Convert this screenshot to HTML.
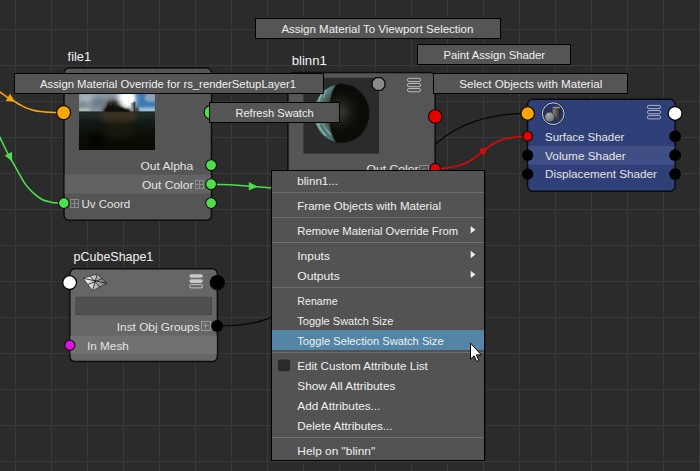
<!DOCTYPE html>
<html>
<head>
<meta charset="utf-8">
<title>Node Editor</title>
<style>
html,body{margin:0;padding:0;background:#2b2b2b;overflow:hidden;}
body{width:700px;height:471px;position:relative;font-family:"Liberation Sans",sans-serif;}
svg{position:absolute;left:0;top:0;display:block;}
text{font-family:"Liberation Sans",sans-serif;}
.ttl{font-size:13.5px;fill:#f2f2f2;}
.lbl{font-size:11.7px;fill:#e4e4e4;}
.mn{font-size:11.5px;fill:#f0f0f0;}
</style>
</head>
<body>
<svg width="700" height="471" viewBox="0 0 700 471">
<defs>
  <pattern id="grid" x="15" y="29" width="36" height="36" patternUnits="userSpaceOnUse">
    <rect x="0" y="0" width="36" height="36" fill="#2b2b2b"/>
    <rect x="0" y="0" width="1" height="36" fill="#393939"/>
    <rect x="0" y="0" width="36" height="1" fill="#393939"/>
  </pattern>
  <linearGradient id="sky" x1="0" y1="0" x2="1" y2="0">
    <stop offset="0" stop-color="#8fa3b3"/>
    <stop offset="0.3" stop-color="#7f8f9a"/>
    <stop offset="0.62" stop-color="#e8eef2"/>
    <stop offset="0.72" stop-color="#ffffff"/>
    <stop offset="0.82" stop-color="#6d9cc6"/>
    <stop offset="1" stop-color="#5a86ad"/>
  </linearGradient>
  <linearGradient id="gnd" x1="0" y1="0" x2="0" y2="1">
    <stop offset="0" stop-color="#223232"/>
    <stop offset="0.25" stop-color="#141c18"/>
    <stop offset="0.6" stop-color="#0c0d06"/>
    <stop offset="1" stop-color="#0a0a03"/>
  </linearGradient>
  <filter id="b0" x="-40%" y="-40%" width="180%" height="180%"><feGaussianBlur stdDeviation="0.6"/></filter>
  <filter id="b1" x="-40%" y="-40%" width="180%" height="180%"><feGaussianBlur stdDeviation="1.2"/></filter>
  <filter id="b2" x="-60%" y="-60%" width="220%" height="220%"><feGaussianBlur stdDeviation="2.5"/></filter>
  <clipPath id="gndclip"><rect x="79" y="112.2" width="76" height="38"/></clipPath>
  <clipPath id="swclip"><rect x="79" y="76" width="76" height="74"/></clipPath>
  <clipPath id="sphclip"><ellipse cx="341.5" cy="113.4" rx="28" ry="29.7"/></clipPath>
  <radialGradient id="sphhl" cx="339" cy="112" r="24" gradientUnits="userSpaceOnUse">
    <stop offset="0" stop-color="#403f38" stop-opacity="1"/>
    <stop offset="0.35" stop-color="#292823" stop-opacity="0.85"/>
    <stop offset="1" stop-color="#0b0b08" stop-opacity="0"/>
  </radialGradient>
  <linearGradient id="teal" x1="0" y1="0" x2="0" y2="1">
    <stop offset="0" stop-color="#527a78"/>
    <stop offset="0.5" stop-color="#78a19d"/>
    <stop offset="1" stop-color="#466c6a"/>
  </linearGradient>
  <linearGradient id="cyl" x1="0" y1="0" x2="1" y2="0">
    <stop offset="0" stop-color="#8a8a8a"/>
    <stop offset="0.45" stop-color="#606060"/>
    <stop offset="1" stop-color="#202020"/>
  </linearGradient>
  <radialGradient id="ball" cx="0.35" cy="0.3" r="0.8">
    <stop offset="0" stop-color="#a8a8a8"/>
    <stop offset="1" stop-color="#6a6a6a"/>
  </radialGradient>
  <linearGradient id="mesh" x1="0" y1="0" x2="1" y2="0">
    <stop offset="0" stop-color="#ffffff"/>
    <stop offset="0.45" stop-color="#c8c8c8"/>
    <stop offset="1" stop-color="#6a6a6a"/>
  </linearGradient>
</defs>

<!-- background grid -->
<rect x="0" y="0" width="700" height="471" fill="url(#grid)"/>

<!-- CONNECTIONS -->
<g fill="none" stroke-width="1.6" stroke-linecap="round">
  <path d="M -8.0,86.0 C -6.7,87.0 -2.2,90.4 0.0,92.0 C 2.2,93.6 3.3,94.5 5.0,95.7 C 6.7,96.9 8.3,98.0 10.0,99.0 C 11.7,100.0 13.3,100.8 15.0,101.8 C 16.7,102.8 18.3,103.9 20.0,104.8 C 21.7,105.7 23.3,106.7 25.0,107.4 C 26.7,108.2 28.3,108.8 30.0,109.3 C 31.7,109.8 33.3,110.2 35.0,110.6 C 36.7,111.0 38.3,111.3 40.0,111.5 C 41.7,111.7 43.3,111.9 45.0,112.0 C 46.7,112.1 48.2,112.2 50.0,112.3 C 51.8,112.4 53.7,112.5 56.0,112.5 C 58.3,112.5 62.7,112.5 64.0,112.5" stroke="#f5a50a"/>
  <path d="M -3.0,131.5 C -2.5,132.5 -1.8,133.8 0.0,137.6 C 1.8,141.3 6.0,150.0 8.0,154.0 C 10.0,158.0 10.7,158.8 12.2,161.4 C 13.7,164.1 14.8,166.1 17.0,169.9 C 19.2,173.7 22.7,180.4 25.5,184.4 C 28.3,188.4 31.2,191.1 34.0,193.7 C 36.8,196.2 39.7,198.3 42.5,199.7 C 45.3,201.1 48.5,201.6 51.0,202.2 C 53.5,202.8 55.6,202.9 57.8,203.0 C 60.0,203.1 63.0,203.0 64.0,203.0" stroke="#4ede4e"/>
  <path d="M 211,184.2 C 235,184.2 250,186.5 272,188" stroke="#4ede4e"/>
  <path d="M 430,149.5 C 455,124 490,113.4 528,113.4" stroke="#060606" stroke-width="1.35"/>
  <path d="M 435,168.6 C 490,168.6 473,136.3 528,136.3" stroke="#e00808"/>
  <path d="M 217,326 C 245,326 262,322 273,316.7" stroke="#060606" stroke-width="1.35"/>
</g>
<!-- arrows -->
<polygon points="10,93.8 15.2,101.7 5.8,100.9" fill="#f5a50a"/>
<polygon points="4.7,155.6 11.9,152 12.3,161.6" fill="#4ede4e"/>
<polygon points="248.8,182 257.6,186.6 248.8,190.4" fill="#4ede4e"/>
<polygon points="478.9,148.8 487.3,148.2 483.7,156" fill="#e00808"/>

<!-- ===== file1 node ===== -->
<text class="ttl" x="67.6" y="60.8" textLength="23.4" lengthAdjust="spacingAndGlyphs">file1</text>
<rect x="64" y="68.1" width="147.5" height="152.2" rx="5" ry="5" fill="#555555" stroke="#0c0c0c" stroke-width="1.5"/>
<rect x="64.7" y="174.6" width="146.1" height="19.1" fill="#636363"/>
<!-- swatch -->
<g clip-path="url(#swclip)">
  <rect x="79" y="76" width="76" height="36.5" fill="#8896a2"/>
  <!-- left clouds -->
  <ellipse cx="87" cy="98" rx="9" ry="4" fill="#a9b6bf" filter="url(#b2)"/>
  <ellipse cx="98" cy="103" rx="7" ry="5" fill="#6d7c89" filter="url(#b2)"/>
  <ellipse cx="82" cy="105" rx="5" ry="3" fill="#7f8e99" filter="url(#b1)"/>
  <rect x="79" y="108.8" width="11" height="2.6" fill="#c6ccba" filter="url(#b1)"/>
  <!-- right blue sky -->
  <rect x="135" y="88" width="24" height="25" fill="#3f7ab6" filter="url(#b2)"/>
  <ellipse cx="151" cy="97.5" rx="6.5" ry="4.5" fill="#8fa3b6" filter="url(#b1)"/>
  <rect x="138" y="107.5" width="18" height="4.5" fill="#9fc0d6" filter="url(#b1)"/>
  <!-- white glow -->
  <ellipse cx="126.5" cy="99" rx="9" ry="10" fill="#ffffff" filter="url(#b2)"/>
  <ellipse cx="128" cy="98" rx="6" ry="6.5" fill="#ffffff" filter="url(#b1)"/>
  <!-- smoky halo + dark skyline -->
  <ellipse cx="112" cy="108" rx="10" ry="9.5" fill="#55524c" opacity="0.6" filter="url(#b2)"/>
  <ellipse cx="113" cy="106" rx="6" ry="6" fill="#2c2823" opacity="0.6" filter="url(#b1)"/>
  <path d="M103,112.5 L104,109 L106.5,107.5 L108,103.5 L109.5,102 L110.5,105 L112,105.5 L113,102.5 L114.5,102 L115.5,105 L117,106 L119,105.5 L120,107 L123,107.5 L125,109 L128,108.8 L130,110 L131,112.5 Z" fill="#17120d" filter="url(#b1)"/>
  <path d="M105,112.5 L105.5,109.5 L108,106 L111,106.5 L113,104.5 L115,106.5 L119,107 L123,108.5 L129,110.5 L130,112.5 Z" fill="#120e0a"/>
  <!-- tower -->
  <rect x="131.2" y="102.8" width="4.2" height="9.3" fill="#8d8f92"/>
  <rect x="133.4" y="101.8" width="2" height="10.3" fill="#3c3c3c"/>
  <rect x="135.4" y="108" width="3" height="4.2" fill="#2a2620" filter="url(#b1)"/>
  <!-- ground -->
  <rect x="79" y="111.8" width="76" height="38.5" fill="url(#gnd)"/>
  <rect x="79" y="111.4" width="76" height="1.2" fill="#1a1f1c" opacity="0.8"/>
  <g clip-path="url(#gndclip)">
  <ellipse cx="119" cy="115" rx="19" ry="9" fill="#3d3324" opacity="0.9" filter="url(#b2)"/>
  <ellipse cx="119" cy="130" rx="16" ry="9" fill="#1f1a0f" opacity="0.6" filter="url(#b2)"/>
  <ellipse cx="96" cy="141" rx="7" ry="5" fill="#040402" opacity="0.8" filter="url(#b2)"/>
  </g>
</g>
<!-- labels -->
<text class="lbl" x="140.5" y="170.3" textLength="52.7" lengthAdjust="spacingAndGlyphs">Out Alpha</text>
<text class="lbl" x="142" y="189.3" textLength="51.5" lengthAdjust="spacingAndGlyphs">Out Color</text>
<text class="lbl" x="81.4" y="208.3" textLength="48.8" lengthAdjust="spacingAndGlyphs">Uv Coord</text>
<g fill="#606060" stroke="#8c8c8c" stroke-width="1">
  <rect x="195.5" y="180.5" width="8" height="8"/>
  <path d="M196,184.5 h7 M199.5,181 v7"/>
  <rect x="70.5" y="199.5" width="8" height="8" fill="#565656" stroke="#888888"/>
  <path d="M71,203.5 h7 M74.5,200 v7" stroke="#888888"/>
</g>
<!-- ports -->
<circle cx="63.6" cy="112.6" r="7" fill="#ffa500" stroke="#0a0a0a" stroke-width="1.2"/>
<g fill="#4ede4e" stroke="#0a0a0a" stroke-width="1.1">
  <circle cx="211.1" cy="112.4" r="7" stroke-width="1.2"/>
  <circle cx="211.1" cy="165.2" r="5.4"/>
  <circle cx="211.1" cy="184.2" r="5.4"/>
  <circle cx="211.1" cy="203.1" r="5.4"/>
  <circle cx="63.8" cy="203.1" r="5.4"/>
</g>

<!-- ===== blinn1 node ===== -->
<text class="ttl" x="291.7" y="64.6" textLength="35.1" lengthAdjust="spacingAndGlyphs">blinn1</text>
<rect x="287.9" y="72.5" width="147.3" height="125" rx="5" ry="5" fill="#555555" stroke="#0c0c0c" stroke-width="1.5"/>
<rect x="303.4" y="77.8" width="75.6" height="75.8" fill="#2b2b2b"/>
<g clip-path="url(#sphclip)">
  <ellipse cx="341.5" cy="113.4" rx="28" ry="29.7" fill="url(#teal)"/>
  <path d="M316,96 q5,7 2,16 M320,124 q3,7 9,11 M314,108 q4,3 5,8 M323,90 q3,5 2,10 M318,132 q4,4 9,6" stroke="#456b6a" stroke-width="1.8" fill="none" opacity="0.75" filter="url(#b1)"/>
  <path d="M322,93 q-3,5 -3,10 M326,90 q-2,4 -2,8 M318,124 q3,7 8,12 M322,122 q3,7 9,13 M316,118 q1,4 3,7" stroke="#b9d6d2" stroke-width="1.3" fill="none" opacity="0.6" filter="url(#b0)"/>
  <path d="M340,83 A10.5,30.4 0 0 0 340,144 L372,144 L372,83 Z" fill="#0b0b08"/>
  <circle cx="339" cy="112" r="24" fill="url(#sphhl)"/>
  <path d="M340,83 A10.5,30.4 0 0 0 340,144" fill="none" stroke="#0b0b08" stroke-width="1.2" filter="url(#b1)" opacity="0.8"/>
</g>
<ellipse cx="341.5" cy="113.4" rx="27.8" ry="29.5" fill="none" stroke="#1a1a14" stroke-width="0.8" opacity="0.55"/>
<!-- octagon -->
<polygon points="375.9,77.3 381.3,77.3 385,81 385,86.4 381.3,90.1 375.9,90.1 372.2,86.4 372.2,81" transform="translate(-0.1,0.3)" fill="#8a8a8a" stroke="#0a0a0a" stroke-width="1.3"/>
<!-- hamburger -->
<g fill="none" stroke="#c6c6c6" stroke-width="0.9">
  <rect x="407.4" y="78.3" width="13.2" height="3.3" rx="1.65"/>
  <rect x="407.4" y="83.4" width="13.2" height="3.3" rx="1.65"/>
  <rect x="407.4" y="88.5" width="13.2" height="3.3" rx="1.65"/>
</g>
<text class="lbl" x="366.6" y="173.0" textLength="52" lengthAdjust="spacingAndGlyphs">Out Color</text>
<g fill="none" stroke="#8a8a8a" stroke-width="1">
  <rect x="419.5" y="165.5" width="9" height="9"/>
  <path d="M421.5,170 h5 M424,167.5 v5"/>
</g>
<circle cx="435.2" cy="116.6" r="6.8" fill="#e60000" stroke="#0a0a0a" stroke-width="1.1"/>
<circle cx="435.2" cy="168.6" r="5.2" fill="#e60000" stroke="#0a0a0a" stroke-width="1.1"/>

<!-- ===== shading group node ===== -->
<rect x="527.6" y="99.3" width="147.5" height="92" rx="5" ry="5" fill="#2f4079" stroke="#0a0a0e" stroke-width="1.5"/>
<rect x="528.3" y="146" width="146.1" height="18.7" fill="#3f4f86"/>
<!-- icon -->
<circle cx="553.2" cy="113.7" r="11.6" fill="#27335f" stroke="#151a30" stroke-width="1"/>
<circle cx="553.2" cy="113.7" r="10.9" fill="none" stroke="#d2d6e2" stroke-width="1"/>
<rect x="552.4" y="107.6" width="7.8" height="10.6" fill="url(#cyl)" stroke="#2a2a2a" stroke-width="0.5"/>
<ellipse cx="556.3" cy="118.2" rx="3.9" ry="1.3" fill="#3a3a3a"/>
<ellipse cx="556.3" cy="107.6" rx="3.9" ry="1.4" fill="#8f8f8f" stroke="#333" stroke-width="0.6"/>
<circle cx="549.7" cy="117" r="5" fill="url(#ball)" stroke="#2a2a2a" stroke-width="0.7"/>
<!-- hamburger -->
<g fill="none" stroke="#b9bccb" stroke-width="0.9">
  <rect x="647.4" y="105.4" width="13.2" height="3.3" rx="1.65"/>
  <rect x="647.4" y="110.5" width="13.2" height="3.3" rx="1.65"/>
  <rect x="647.4" y="115.6" width="13.2" height="3.3" rx="1.65"/>
</g>
<text class="lbl" x="545.1" y="140.8" textLength="79.2" lengthAdjust="spacingAndGlyphs">Surface Shader</text>
<text class="lbl" x="545.1" y="159.6" textLength="80.7" lengthAdjust="spacingAndGlyphs">Volume Shader</text>
<text class="lbl" x="545.1" y="178.4" textLength="111.9" lengthAdjust="spacingAndGlyphs">Displacement Shader</text>
<circle cx="527.7" cy="113.5" r="6.7" fill="#ffa500" stroke="#0a0a0a" stroke-width="1.1"/>
<circle cx="675.1" cy="113.4" r="6.9" fill="#ffffff" stroke="#0a0a0a" stroke-width="1.3"/>
<circle cx="527.7" cy="136.2" r="4.9" fill="#e60000" stroke="#0a0a0a" stroke-width="1.1"/>
<g fill="#000000">
  <circle cx="527.7" cy="155.2" r="5.6"/>
  <circle cx="527.7" cy="174.1" r="5.6"/>
  <circle cx="675.1" cy="136.3" r="5.9"/>
  <circle cx="675.1" cy="155.2" r="5.9"/>
  <circle cx="675.1" cy="174.1" r="5.9"/>
</g>

<!-- ===== pCubeShape1 node ===== -->
<text class="ttl" x="73.6" y="260.8" textLength="79.7" lengthAdjust="spacingAndGlyphs">pCubeShape1</text>
<rect x="69.8" y="268.7" width="147.6" height="92.9" rx="5" ry="5" fill="#666666" stroke="#0c0c0c" stroke-width="1.5"/>
<rect x="70.5" y="335.5" width="146.2" height="18.4" fill="#717171"/>
<rect x="75.9" y="297.3" width="135.6" height="17.3" fill="#505050" stroke="#494949" stroke-width="1"/>
<!-- mesh icon -->
<polygon points="83.1,278.3 97.3,274 107,283.3 92.6,290.7" fill="url(#mesh)" stroke="#2a2a2a" stroke-width="0.7"/>
<g stroke="#1c1c1c" stroke-width="0.85" fill="none">
  <path d="M90.2,276.2 L99.8,287 M87.9,284.5 L102.2,278.7 M83.1,278.3 L107,283.3 M97.3,274 L92.6,290.7"/>
</g>
<!-- hamburger (top two filled) -->
<rect x="189.4" y="274.2" width="13.4" height="3.6" rx="1.8" fill="#c8c8c8"/>
<rect x="189.4" y="279.3" width="13.4" height="3.6" rx="1.8" fill="#c8c8c8"/>
<rect x="189.6" y="284.6" width="13" height="3.3" rx="1.65" fill="none" stroke="#cfcfcf" stroke-width="0.9"/>
<text class="lbl" x="116.8" y="331.1" textLength="82.8" lengthAdjust="spacingAndGlyphs">Inst Obj Groups</text>
<text class="lbl" x="86.9" y="350.2" textLength="42" lengthAdjust="spacingAndGlyphs">In Mesh</text>
<g fill="none" stroke="#989898" stroke-width="1">
  <rect x="201.5" y="321.5" width="9" height="9"/>
  <path d="M203,325.5 h6 M205.5,323 v6"/>
</g>
<circle cx="69.6" cy="282.6" r="6.9" fill="#ffffff" stroke="#0a0a0a" stroke-width="1.3"/>
<circle cx="217.3" cy="282.7" r="7.6" fill="#000000"/>
<circle cx="217.2" cy="325.9" r="6" fill="#000000"/>
<circle cx="69.8" cy="345.3" r="5.1" fill="#e010e0" stroke="#0a0a0a" stroke-width="1.1"/>

<!-- ===== marking menu boxes ===== -->
<g fill="#555555" stroke="#000000" stroke-width="1">
  <rect x="255.5" y="18.5" width="245" height="20"/>
  <rect x="417.5" y="44.5" width="153" height="20"/>
  <rect x="433.5" y="73.5" width="194" height="20"/>
  <rect x="14.5" y="73.5" width="309" height="20"/>
  <rect x="209.5" y="102.5" width="130" height="20"/>
</g>
<text class="mn" x="281.4" y="32.6" textLength="192" lengthAdjust="spacingAndGlyphs">Assign Material To Viewport Selection</text>
<text class="mn" x="443.5" y="58.6" textLength="101.5" lengthAdjust="spacingAndGlyphs">Paint Assign Shader</text>
<text class="mn" x="459.3" y="87.6" textLength="143" lengthAdjust="spacingAndGlyphs">Select Objects with Material</text>
<text class="mn" x="40" y="87.6" textLength="256" lengthAdjust="spacingAndGlyphs">Assign Material Override for rs_renderSetupLayer1</text>
<text class="mn" x="235.4" y="116.6" textLength="78.2" lengthAdjust="spacingAndGlyphs">Refresh Swatch</text>

<!-- ===== context menu ===== -->
<rect x="271.5" y="170.5" width="213" height="290" fill="#535353" stroke="#000000" stroke-width="1"/>
<rect x="485" y="171" width="1" height="290" fill="#1a1a1a" opacity="0.6"/>
<rect x="272" y="330" width="212" height="20" fill="#5285a6"/>
<g fill="#6f6f6f">
  <rect x="272" y="192" width="212" height="1"/>
  <rect x="272" y="217" width="212" height="1"/>
  <rect x="272" y="242" width="212" height="1"/>
  <rect x="272" y="287" width="212" height="1"/>
  <rect x="272" y="352" width="212" height="1"/>
  <rect x="272" y="437" width="212" height="1"/>
</g>
<text class="mn" x="297.3" y="184.6" textLength="40.7" lengthAdjust="spacingAndGlyphs">blinn1...</text>
<text class="mn" x="297.3" y="209.6" textLength="143.7" lengthAdjust="spacingAndGlyphs">Frame Objects with Material</text>
<text class="mn" x="297.3" y="234.6" textLength="160.8" lengthAdjust="spacingAndGlyphs">Remove Material Override From</text>
<text class="mn" x="297.3" y="259.6" textLength="32.6" lengthAdjust="spacingAndGlyphs">Inputs</text>
<text class="mn" x="297.3" y="279.6" textLength="42.5" lengthAdjust="spacingAndGlyphs">Outputs</text>
<text class="mn" x="297.3" y="304.6" textLength="40.3" lengthAdjust="spacingAndGlyphs">Rename</text>
<text class="mn" x="297.3" y="324.6" textLength="96.1" lengthAdjust="spacingAndGlyphs">Toggle Swatch Size</text>
<text class="mn" x="297.3" y="344.6" textLength="146.3" lengthAdjust="spacingAndGlyphs">Toggle Selection Swatch Size</text>
<text class="mn" x="297.3" y="369.6" textLength="130.5" lengthAdjust="spacingAndGlyphs">Edit Custom Attribute List</text>
<text class="mn" x="297.3" y="389.6" textLength="98.1" lengthAdjust="spacingAndGlyphs">Show All Attributes</text>
<text class="mn" x="297.3" y="409.6" textLength="83.1" lengthAdjust="spacingAndGlyphs">Add Attributes...</text>
<text class="mn" x="297.3" y="429.6" textLength="95.2" lengthAdjust="spacingAndGlyphs">Delete Attributes...</text>
<text class="mn" x="297.3" y="454.6" textLength="77.8" lengthAdjust="spacingAndGlyphs">Help on "blinn"</text>
<!-- submenu arrows -->
<g fill="#ececec">
  <polygon points="470.7,226 475.4,229.7 470.7,233.4"/>
  <polygon points="470.7,250.8 475.4,254.5 470.7,258.2"/>
  <polygon points="470.7,270.7 475.4,274.4 470.7,278.1"/>
</g>
<!-- checkbox -->
<rect x="278" y="359.6" width="12" height="11.6" rx="1.5" fill="#2b2b2b"/>
<!-- cursor -->
<path d="M470.5,343.2 L470.5,359.2 L474.1,355.8 L476.6,361.5 L478.9,360.5 L476.4,354.9 L481.4,354.9 Z" fill="#ffffff" stroke="#000000" stroke-width="1" stroke-linejoin="miter"/>

</svg>
</body>
</html>
